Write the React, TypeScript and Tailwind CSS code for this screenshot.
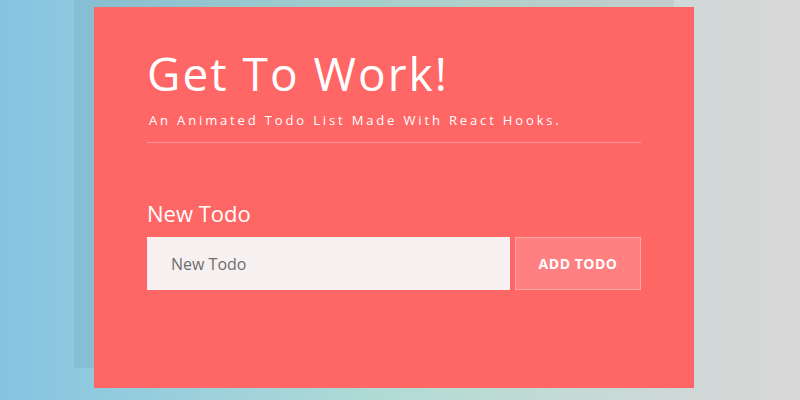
export default function App() {
  return (
    <div
      className="relative h-[400px] w-full overflow-hidden bg-gradient-to-r from-[#85c4e1] via-[#b2dcd4] to-[#dad7d8]"
      style={{ fontFamily: '"Open Sans", sans-serif' }}
    >
      {/* back shadow panel */}
      <div className="absolute left-[74px] top-0 h-[368px] w-[600px] bg-black/5" />

      {/* card */}
      <div className="absolute left-[94px] top-[7px] h-[381px] w-[600px] bg-[#ff6666] px-[53px] pt-[38px]">
        <h1 className="text-[46px] leading-[56px] tracking-[2px] text-white">Get To Work!</h1>
        <p className="mt-[10px] pl-[2px] text-[13px] leading-[18px] tracking-[2.85px] text-white">
          An Animated Todo List Made With React Hooks.
        </p>
        <div className="mt-[13px] h-px w-[494px] bg-white/30" />

        <div className="mt-[55px] text-[22px] leading-[30px] text-white">New Todo</div>
        <div className="mt-[9px] flex w-[494px] gap-[5px]">
          <input
            className="h-[53px] w-[363px] bg-[#f6f0f0] px-[24px] text-[16px] text-gray-700 placeholder:text-[#6d6d6d] outline-none"
            placeholder="New Todo"
          />
          <button className="h-[53px] flex-1 border border-white/30 bg-[#ff8080] text-[14px] font-bold tracking-[0.5px] text-white">
            ADD TODO
          </button>
        </div>
      </div>
    </div>
  );
}
